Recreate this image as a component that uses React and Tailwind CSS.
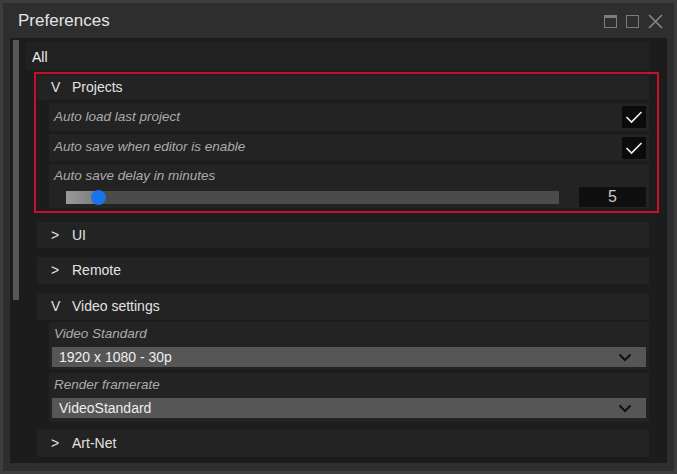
import React from "react";

const font = { fontFamily: '"Liberation Sans", Arial, sans-serif' };

function Check() {
  return (
    <div className="w-[24px] h-[22px] bg-[#0b0b0b] flex items-center justify-center">
      <svg width="18" height="14" viewBox="0 0 18 14">
        <path d="M1.5 7 L6.5 12 L16.5 2" fill="none" stroke="#f2f2f2" strokeWidth="1.6" />
      </svg>
    </div>
  );
}

function Chevron() {
  return (
    <svg width="14" height="9" viewBox="0 0 14 9">
      <path d="M1.5 1.5 L7 7 L12.5 1.5" fill="none" stroke="#111" strokeWidth="2" />
    </svg>
  );
}

function SectionHeader({ open, title, className = "" }) {
  return (
    <div className={"flex items-center bg-[#232323] text-[14px] text-[#e2e2e2] " + className}>
      <span className="w-[21px] pl-[14px] box-content text-[14px]">{open ? "V" : ">"}</span>
      <span>{title}</span>
    </div>
  );
}

function Select({ value }) {
  return (
    <div className="mx-[3px] h-[20px] bg-[#565656] flex items-center justify-between pl-[7px] pr-[14px] text-[14px] text-[#eeeeee]">
      <span>{value}</span>
      <Chevron />
    </div>
  );
}

export default function App() {
  return (
    <div className="w-[677px] h-[474px] bg-[#3d3d3d] p-[3px]" style={font}>
      <div className="w-full h-full bg-[#2e2e2e] flex flex-col">
        <div className="h-[35px] flex items-center justify-between pl-[15px] pr-[11px] pt-[1px]">
          <span className="text-[17px] text-[#e4e4e4]">Preferences</span>
          <div className="flex items-center gap-[9px] mt-[1px]">
            <svg width="13" height="13" viewBox="0 0 13 13">
              <rect x="0.5" y="0.5" width="12" height="12" fill="none" stroke="#7c7c7c" strokeWidth="1" />
              <rect x="0.5" y="0.5" width="12" height="2.5" fill="#7c7c7c" />
            </svg>
            <svg width="13" height="13" viewBox="0 0 13 13">
              <rect x="0.5" y="0.5" width="12" height="12" fill="none" stroke="#7c7c7c" strokeWidth="1" />
            </svg>
            <svg width="15" height="15" viewBox="0 0 15 15">
              <path d="M1 1 L14 14 M14 1 L1 14" stroke="#8a8a8a" strokeWidth="1.5" />
            </svg>
          </div>
        </div>
        <div className="flex-1 mx-[7px] mb-[8px] bg-[#1c1c1c] flex">
          <div className="pl-[3px] pt-[2px] w-[15px]">
            <div className="w-[6px] h-[260px] bg-[#585858]" />
          </div>
          <div className="w-[624px] pt-[4px] flex flex-col">
            <div className="h-[28px] bg-[#212121] flex items-center pl-[7px] pt-[2px] text-[14px] text-[#f0f0f0]">All</div>

            <div className="relative ml-[12px] mt-[5px]">
              <div className="absolute -top-[3px] -left-[3px] -right-[10px] -bottom-[5px] border-2 border-[#c8102a] pointer-events-none" />
              <SectionHeader open title="Projects" className="h-[25px]" />
              <div className="ml-[12px] mt-[3px] h-[28px] bg-[#232323] flex items-center justify-between pl-[5px] pr-[3px]">
                <span className="italic text-[13.5px] text-[#ababab]">Auto load last project</span>
                <Check />
              </div>
              <div className="ml-[12px] mt-[3px] h-[27px] bg-[#232323] flex items-center justify-between pl-[5px] pr-[3px]">
                <span className="italic text-[13.5px] text-[#ababab]">Auto save when editor is enable</span>
                <Check />
              </div>
              <div className="ml-[12px] mt-[3px] h-[44px] bg-[#232323] flex flex-col pl-[5px] pr-[3px] pt-[3px]">
                <span className="italic text-[13.5px] text-[#ababab] leading-[18px]">Auto save delay in minutes</span>
                <div className="flex items-center justify-between mt-[2px]">
                  <div className="relative ml-[12px] w-[493px] h-[13px] bg-[#4b4b4b]">
                    <div className="absolute left-0 top-0 h-full w-[32px] bg-gradient-to-r from-[#9a9a9a] to-[#7a7a7a]" />
                    <div className="absolute left-[25px] -top-[1px] w-[15px] h-[15px] rounded-full bg-[#1a73e8]" />
                  </div>
                  <div className="w-[67px] h-[20px] bg-[#0f0f0f] flex items-center justify-center text-[16px] text-[#c8c8c8]">5</div>
                </div>
              </div>
            </div>

            <SectionHeader title="UI" className="ml-[12px] mt-[14px] h-[26px]" />
            <SectionHeader title="Remote" className="ml-[12px] mt-[9px] h-[27px]" />
            <SectionHeader open title="Video settings" className="ml-[12px] mt-[9px] h-[27px]" />
            <div className="ml-[24px] mt-[2px] h-[47px] bg-[#232323] flex flex-col">
              <div className="h-[25px] flex items-center pl-[5px] italic text-[13.5px] text-[#ababab]">Video Standard</div>
              <Select value="1920 x 1080 - 30p" />
            </div>
            <div className="ml-[24px] mt-[4px] h-[49px] bg-[#232323] flex flex-col">
              <div className="h-[25px] flex items-center pl-[5px] italic text-[13.5px] text-[#ababab]">Render framerate</div>
              <Select value="VideoStandard" />
            </div>
            <SectionHeader title="Art-Net" className="ml-[12px] mt-[7px] h-[28px]" />
          </div>
        </div>
      </div>
    </div>
  );
}
